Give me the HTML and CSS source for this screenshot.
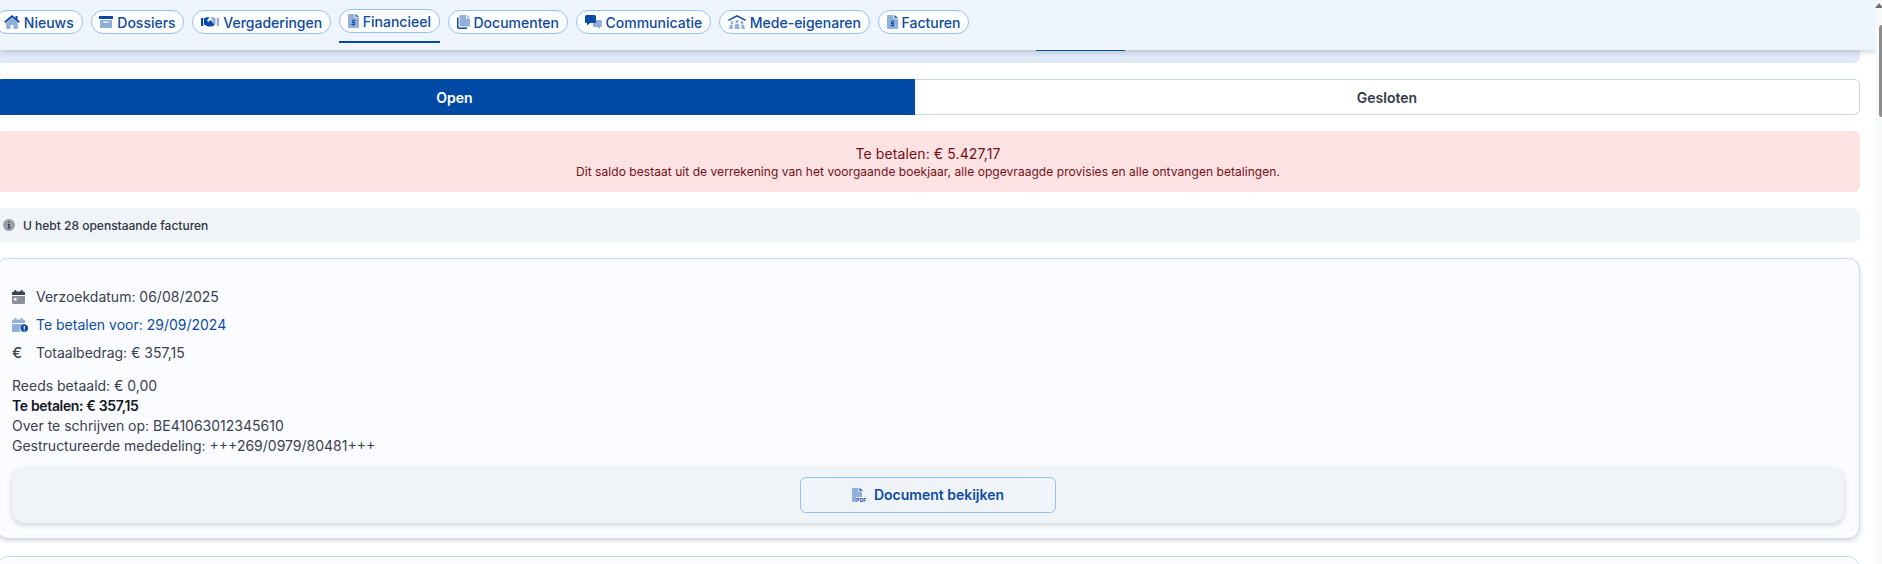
FILE: index.html
```html
<!DOCTYPE html>
<html lang="nl">
<head>
<meta charset="utf-8">
<title>Financieel</title>
<link rel="stylesheet" href="styles.css">
</head>
<body>
<header class="topbar">
  <nav class="nav">
    <a class="pill"><svg class="ic ic-home" viewBox="0 0 16 14"><path class="b" d="M8 3 2.200 7.800V13a1 1 0 0 0 1 1h3.300v-4h3v4h3.300a1 1 0 0 0 1-1V7.800z"/><path class="a" d="M8 0 .2 6.500 1.400 8 8 2.500 14.600 8l1.200-1.500L13.500 4.600V1h-2v2z"/></svg>Nieuws</a>
    <a class="pill"><svg class="ic ic-box" viewBox="0 0 14 12"><path class="a" d="M0 0h14v3H0z"/><path class="b" d="M1 4h12v7a1 1 0 0 1-1 1H2a1 1 0 0 1-1-1zM4.500 5.500v1.300h5V5.500z"/></svg>Dossiers</a>
    <a class="pill"><svg class="ic ic-hands" viewBox="0 0 18 10"><path class="a" d="M0 1h2.200v8H0zM3 1.200 6.500 0l2 .5L6.400 3a1 1 0 0 0 1.400 1.400L9.500 3l4 4.500-1.500 2-1-.5-1 .8-1.300-.6-1.200.5L3 7.500z"/><path class="b" d="M9.500 0.500 11.500 0l3 1.200v6.300l-.8.200zM15.800 1H18v8h-2.200z"/></svg>Vergaderingen</a>
    <div class="active-wrap"><a class="pill"><svg class="ic ic-doc" viewBox="0 0 11 14"><path class="b" d="M1 0h5.500v3.500H11V13a1 1 0 0 1-1 1H1a1 1 0 0 1-1-1V1a1 1 0 0 1 1-1z"/><path class="a" d="M7.500 0 11 2.700H7.500zM5 5.500h1v.8h1.500v1H4.800v.8H7V11H6v.8H5V11H3.500v-1h2.700v-.8H4V6.300h1z"/></svg>Financieel</a></div>
    <a class="pill"><svg class="ic ic-docs" viewBox="0 0 13 14"><path class="a" d="M0 2.500h1.500v9a1 1 0 0 0 1 1H10V14H2a2 2 0 0 1-2-2z"/><path class="b" d="M3.500 0H9v3.500h4V10.500a1 1 0 0 1-1 1H3.500a1 1 0 0 1-1-1V1a1 1 0 0 1 1-1z"/><path class="b" d="M10 0l3 2.500h-3z"/></svg>Documenten</a>
    <a class="pill"><svg class="ic ic-chat" viewBox="0 0 17 14"><path class="b" d="M8 5h7.500A1.500 1.500 0 0 1 17 6.500v4a1.500 1.500 0 0 1-1.500 1.500H15v2l-2.500-2H9.500A1.500 1.500 0 0 1 8 10.500z"/><path class="a" d="M1.500 0h8A1.500 1.500 0 0 1 11 1.500v5A1.500 1.500 0 0 1 9.500 8H5l-3 2.500V8h-.5A1.500 1.500 0 0 1 0 6.500v-5A1.500 1.500 0 0 1 1.500 0z"/></svg>Communicatie</a>
    <a class="pill"><svg class="ic ic-owners" viewBox="0 0 18 14"><path class="a" d="M9 0 0 4.800l.7 1.200L9 1.700 17.300 6l.7-1.200z"/><path class="b" d="M9 4.800a1.600 1.600 0 1 1 0 3.200 1.600 1.600 0 0 1 0-3.200zM4 6a1.500 1.500 0 1 1 0 3 1.500 1.500 0 0 1 0-3zM14 6a1.500 1.500 0 1 1 0 3 1.500 1.500 0 0 1 0-3zM6.500 14l.8-5.300h3.400l.8 5.300zM1 14l1-4.300h3l-.7 4.300zM17 14l-1-4.300h-3l.7 4.300z"/></svg>Mede-eigenaren</a>
    <a class="pill"><svg class="ic ic-doc" viewBox="0 0 11 14"><path class="b" d="M1 0h5.500v3.500H11V13a1 1 0 0 1-1 1H1a1 1 0 0 1-1-1V1a1 1 0 0 1 1-1z"/><path class="a" d="M7.500 0 11 2.700H7.500zM5 5.500h1v.8h1.500v1H4.800v.8H7V11H6v.8H5V11H3.500v-1h2.700v-.8H4V6.300h1z"/></svg>Facturen</a>
  </nav>
</header>
<div class="scrollbar"><span class="scroll-up"></span><span class="scroll-thumb"></span></div>
<main class="content">
  <div class="subnav"><span class="subnav-mark"></span></div>
  <div class="switch">
    <div class="switch-item switch-on">Open</div>
    <div class="switch-item switch-off">Gesloten</div>
  </div>
  <section class="alert">
    <div class="alert-title">Te betalen: € 5.427,17</div>
    <div class="alert-sub">Dit saldo bestaat uit de verrekening van het voorgaande boekjaar, alle opgevraagde provisies en alle ontvangen betalingen.</div>
  </section>
  <section class="notice">
    <svg class="notice-ic" viewBox="0 0 12 12"><circle cx="6" cy="6" r="6"/><path d="M5.300 2.500h1.400v1.300H5.300zM4.800 5h1.900v3.500h.7v1H4.700v-1h.7V6h-.6z"/></svg>
    <span>U hebt 28 openstaande facturen</span>
  </section>
  <article class="card">
    <div class="facts">
      <div class="fact"><span class="fact-slot"><svg class="cal" viewBox="0 0 13 14"><path class="d1" d="M2.500 0h1.800v1.500h4.400V0h1.800v1.500h1A1.500 1.500 0 0 1 13 3v2H0V3a1.500 1.500 0 0 1 1.500-1.500h1z"/><path class="d2" d="M0 6h13v6.500a1.500 1.500 0 0 1-1.500 1.500h-10A1.500 1.500 0 0 1 0 12.500zM2 8v2.500h2.500V8z"/></svg></span><span>Verzoekdatum: 06/08/2025</span></div>
      <div class="fact fact-due"><span class="fact-slot"><svg class="cal-due" viewBox="0 0 16 14"><path class="b" d="M2.500 0h1.800v1.500h4.400V0h1.800v1.500h1A1.500 1.500 0 0 1 13 3v2H0V3a1.500 1.500 0 0 1 1.500-1.500h1z"/><path class="b" d="M0 6h13v1.500A4.500 4.500 0 0 0 8.300 14H1.500A1.500 1.500 0 0 1 0 12.500z"/><circle class="a" cx="12.300" cy="10.300" r="3.700"/><path class="w" d="M11.700 8h1.200v3h-1.200zM11.700 11.700h1.200v1.100h-1.200z"/></svg></span><span>Te betalen voor: 29/09/2024</span></div>
      <div class="fact"><span class="fact-slot fact-euro">€</span><span>Totaalbedrag: € 357,15</span></div>
    </div>
    <div class="pay">
      <div>Reeds betaald: € 0,00</div>
      <div class="pay-strong">Te betalen: € 357,15</div>
      <div>Over te schrijven op: BE41063012345610</div>
      <div>Gestructureerde mededeling: +++269/0979/80481+++</div>
    </div>
    <div class="actions">
      <a class="doc-btn"><svg class="pdf" viewBox="0 0 14 14"><path class="b" d="M0 0h6.500v3.500H10V9H4v5H1a1 1 0 0 1-1-1z"/><path class="a" d="M7.500 0 11 2.700H7.500z"/><text class="pdf-text" x="4" y="14">PDF</text></svg>Document bekijken</a>
    </div>
  </article>
  <article class="card card-next"></article>
</main>
</body>
</html>
```
FILE: styles.css
```css
* { box-sizing: border-box; }
html, body { margin: 0; height: 100%; }
body {
  height: 564px;
  overflow: hidden;
  background: #fff;
  font-family: Inter, "Liberation Sans", sans-serif;
  color: #3a4150;
  position: relative;
}
.topbar {
  position: absolute;
  top: 0;
  left: 0;
  width: 1876px;
  height: 50px;
  background: #eef5ff;
  box-shadow: 0 2px 6px rgba(60, 80, 110, .28);
  z-index: 5;
}
.nav {
  display: flex;
  align-items: flex-start;
  gap: 8px;
  padding: 10px 0 0 0;
  margin-left: -5px;
}
.pill {
  display: flex;
  align-items: center;
  gap: 4px;
  height: 24px;
  padding: 0 7.8px;
  border: 1px solid #93c0f2;
  border-radius: 12px;
  background: #fdfeff;
  color: #0e4a9e;
  font-size: 14px;
  font-weight: 500;
  white-space: nowrap;
}
.active-wrap {
  height: 34px;
  margin-top: -1px;
  border-bottom: 2px solid #004aa5;
}
.ic { flex: none; height: 14px; }
.ic-home { width: 16px; }
.ic-box { width: 14px; height: 12px; }
.ic-hands { width: 18px; height: 10px; }
.ic-doc { width: 11px; }
.ic-docs { width: 13px; }
.ic-chat { width: 17px; }
.ic-owners { width: 18px; }
.a { fill: #0c4ba5; }
.b { fill: #92aedb; }
.w { fill: #fff; }
.scrollbar {
  position: absolute;
  top: 0;
  right: 0;
  width: 6px;
  height: 564px;
  background: #f8f9fa;
  z-index: 6;
}
.scroll-up {
  position: absolute;
  top: 3px;
  right: -1px;
  width: 0;
  height: 0;
  border-left: 4px solid transparent;
  border-right: 4px solid transparent;
  border-bottom: 5px solid #707070;
}
.scroll-thumb {
  position: absolute;
  top: 25px;
  left: 3px;
  width: 6px;
  height: 92px;
  border-radius: 3px;
  background: #8c8c8c;
}
.content {
  position: absolute;
  top: 0;
  left: -4px;
  width: 1864px;
}
.subnav {
  height: 63px;
  background: #e1ebf8;
  border-radius: 0 0 6px 6px;
  display: flex;
  align-items: flex-end;
  padding: 0 0 12px 1040px;
}
.subnav-mark { width: 89px; height: 2px; background: #004aa5; }
.switch {
  display: flex;
  height: 36px;
  margin-top: 16px;
  font-size: 14px;
  font-weight: 600;
}
.switch-item {
  flex: 1;
  display: flex;
  align-items: center;
  justify-content: center;
  color: #333a47;
}
.switch-on {
  flex: 0 0 919px;
  padding-right: 2px;
  border-radius: 6px 0 0 6px;
  background: #004aa5;
  color: #fff;
}
.switch-off {
  border: 1px solid #cbd5e3;
  border-left: 0;
  border-radius: 0 6px 6px 0;
}
.alert {
  height: 61px;
  margin-top: 16px;
  border-radius: 6px;
  background: #fce2e3;
  color: #751015;
  text-align: center;
  padding-top: 14px;
}
.alert-title { font-size: 14px; line-height: 18px; letter-spacing: .1px; }
.alert-sub { font-size: 12px; line-height: 18px; letter-spacing: .05px; }
.notice {
  display: flex;
  align-items: center;
  height: 34px;
  margin-top: 16px;
  padding-left: 7px;
  gap: 8px;
  border-radius: 6px;
  background: #f0f3f8;
  color: #2e3543;
  font-size: 12px;
  font-weight: 500;
}
.notice-ic { width: 12px; height: 12px; fill: #9a9ea6; }
.notice-ic path { fill: #2e3543; }
.card {
  height: 281px;
  margin-top: 16px;
  padding: 28px 15px 0;
  background: #fbfcff;
  border: 1px solid #cbd8e8;
  border-radius: 12px;
  box-shadow: 0 2px 4px rgba(70, 85, 110, .22);
  font-size: 14px;
  line-height: 20px;
}
.card-next { height: 60px; margin-top: 17px; box-shadow: none; }
.facts { display: flex; flex-direction: column; gap: 8px; }
.fact { display: flex; align-items: center; height: 20px; }
.fact-slot { display: flex; align-items: center; width: 24px; flex: none; }
.cal { width: 13px; height: 14px; }
.cal-due { width: 16px; height: 14px; }
.fact-due { color: #0c4ba5; }
.fact-euro { font-size: 15px; font-weight: 500; }
.d1 { fill: #3a4150; }
.d2 { fill: #8c9098; }
.pay { margin-top: 13px; }
.pay-strong { font-weight: 600; letter-spacing: -.35px; color: #14181f; }
.actions {
  display: flex;
  justify-content: center;
  align-items: center;
  height: 56px;
  margin-top: 11px;
  background: #f0f3f8;
  border-radius: 12px;
  box-shadow: 0 2px 5px rgba(70, 85, 110, .25);
}
.doc-btn {
  display: flex;
  align-items: center;
  justify-content: center;
  gap: 8px;
  width: 256px;
  height: 36px;
  border: 1px solid #93c0f2;
  border-radius: 6px;
  color: #0c4ba5;
  font-size: 14px;
  font-weight: 600;
}
.pdf { width: 14px; height: 14px; overflow: visible; }
.pdf-text { font-size: 5px; font-weight: 700; fill: #0c4ba5; letter-spacing: .2px; }
```
